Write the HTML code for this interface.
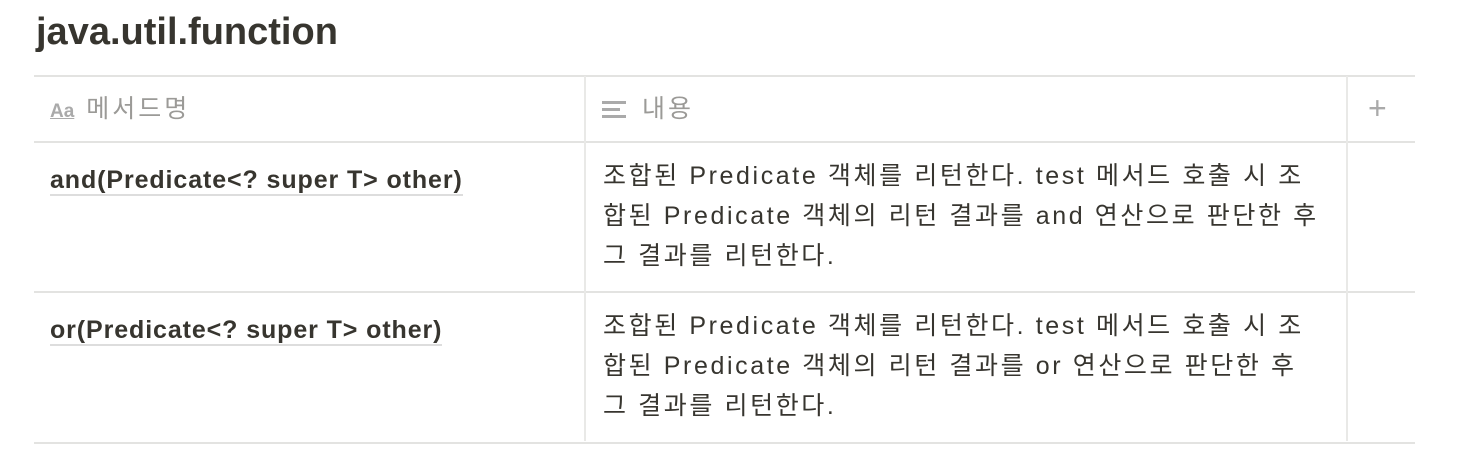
<!DOCTYPE html>
<html><head><meta charset="utf-8"><style>
body{margin:0;background:#fff;width:1460px;height:457px;overflow:hidden;font-family:"Liberation Sans","Noto Sans CJK KR",sans-serif;color:#37352f;position:relative}
.t{position:absolute;left:36px;top:11px;font-size:38px;font-weight:bold;letter-spacing:0px;color:#37352f}
.h{position:absolute;height:2px;background:#e3e3e1;left:34px;width:1381px}
.v{position:absolute;width:2px;background:#e9e9e7}
.c{position:absolute;font-size:25px;white-space:nowrap;line-height:40px;letter-spacing:2.6px}
.hd{color:#9b9a97}
.b{font-weight:bold;border-bottom:2px solid #ddd;line-height:28px;display:inline-block;letter-spacing:0.9px}
</style></head><body>
<div class="t">java.util.function</div>
<div class="h" style="top:75px"></div>
<div class="h" style="top:141px"></div>
<div class="h" style="top:291px"></div>
<div class="h" style="top:442px"></div>
<div class="v" style="left:584px;top:76px;height:365px"></div>
<div class="v" style="left:1346px;top:76px;height:365px"></div>
<div class="c hd" style="left:50px;top:89px"><span style="font-size:19px;font-weight:bold;text-decoration:underline;color:#aaa;letter-spacing:0">Aa</span><span style="margin-left:12px;letter-spacing:3px">메서드명</span></div>
<div class="c hd" style="left:602px;top:89px"><svg width="26" height="20" style="vertical-align:-2px"><rect x="0" y="2" width="24" height="3" fill="#aaa"/><rect x="0" y="9" width="18" height="3" fill="#aaa"/><rect x="0" y="16" width="24" height="3" fill="#aaa"/></svg><span style="margin-left:14px;letter-spacing:3px">내용</span></div>
<div class="c hd" style="left:1368px;top:88px;font-size:32px;color:#aaa">+</div>
<div class="c" style="left:50px;top:160px"><span class="b">and(Predicate&lt;? super T&gt; other)</span></div>
<div class="c" style="left:603px;top:156px">조합된 Predicate 객체를 리턴한다. test 메서드 호출 시 조<br>합된 Predicate 객체의 리턴 결과를 and 연산으로 판단한 후<br>그 결과를 리턴한다.</div>
<div class="c" style="left:50px;top:310px"><span class="b">or(Predicate&lt;? super T&gt; other)</span></div>
<div class="c" style="left:603px;top:306px">조합된 Predicate 객체를 리턴한다. test 메서드 호출 시 조<br>합된 Predicate 객체의 리턴 결과를 or 연산으로 판단한 후<br>그 결과를 리턴한다.</div>
</body></html>
